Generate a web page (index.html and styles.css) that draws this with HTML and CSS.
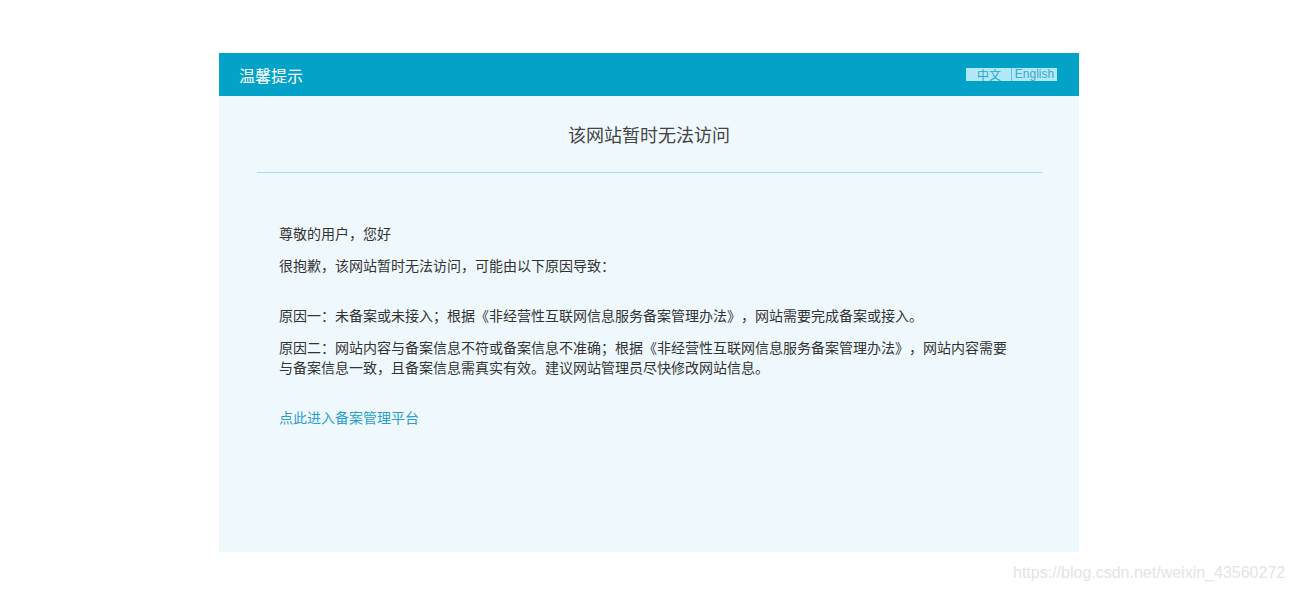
FILE: index.html
```html
<!DOCTYPE html>
<html lang="zh-CN">
<head>
<meta charset="utf-8">
<title>温馨提示</title>
<link rel="stylesheet" href="styles.css">
</head>
<body>
<div class="box">
  <div class="head">
    <span class="head-title">温馨提示</span>
    <div class="lang">
      <span class="lang-item lang-cn">中文</span><span class="lang-item lang-en">English</span>
    </div>
  </div>
  <div class="main">
    <h1 class="title">该网站暂时无法访问</h1>
    <div class="divider"></div>
    <div class="content">
      <p class="p">尊敬的用户，您好</p>
      <p class="p gap-after">很抱歉，该网站暂时无法访问，可能由以下原因导致：</p>
      <p class="p">原因一：未备案或未接入；根据《非经营性互联网信息服务备案管理办法》，网站需要完成备案或接入。</p>
      <p class="p">原因二：网站内容与备案信息不符或备案信息不准确；根据《非经营性互联网信息服务备案管理办法》，网站内容需要与备案信息一致，且备案信息需真实有效。建议网站管理员尽快修改网站信息。</p>
      <a class="link" href="#">点此进入备案管理平台</a>
    </div>
  </div>
</div>
<div class="watermark">https://blog.csdn.net/weixin_43560272</div>
</body>
</html>
```
FILE: styles.css
```css
html, body {
  margin: 0;
  padding: 0;
  background: #ffffff;
}
body {
  font-family: "Noto Sans CJK SC", "Microsoft YaHei", sans-serif;
  color: #333333;
  position: relative;
  height: 591px;
  overflow: hidden;
  text-spacing-trim: space-all;
}
.box {
  width: 860px;
  height: 499px;
  margin: 53px 0 0 219px;
  background: #eff9fd;
  display: flex;
  flex-direction: column;
}
.head {
  height: 43px;
  background: #03a3c9;
  display: flex;
  align-items: center;
  justify-content: space-between;
  padding: 0 22px 0 20px;
}
.head-title {
  color: #ffffff;
  font-size: 16px;
  line-height: 20px;
  padding-top: 1px;
}
.lang {
  display: flex;
  height: 13px;
}
.lang-item {
  display: flex;
  align-items: center;
  height: 13px;
  font-size: 12px;
  line-height: 13px;
  background: #b3e8f5;
  color: #2aa7cd;
  box-sizing: border-box;
}
.lang-cn {
  width: 46px;
  border-right: 1px solid #5cc3de;
  justify-content: flex-end;
  padding-right: 10px;
}
.lang-en {
  width: 45px;
  justify-content: center;
  font-family: "Liberation Sans", Arial, sans-serif;
  color: #3aa9cd;
}
.main {
  flex: 1;
  display: flex;
  flex-direction: column;
}
.title {
  margin: 24px 0 0 0;
  font-size: 18px;
  font-weight: normal;
  line-height: 28px;
  text-align: center;
  color: #444444;
}
.divider {
  height: 1px;
  background: #a9dcea;
  margin: 24px 37px 0 38px;
}
.content {
  padding: 50px 60px 0 60px;
  width: 736px;
  font-size: 14px;
}
.p {
  margin: 0 0 12px 0;
  line-height: 20px;
  font-size: 14px;
}
.gap-after {
  margin-bottom: 30px;
}
.link {
  display: block;
  margin-top: 30px;
  font-size: 14px;
  line-height: 20px;
  color: #2b9fc9;
  text-decoration: none;
}
.watermark {
  position: absolute;
  left: 1013px;
  top: 563px;
  font-family: "Liberation Sans", Arial, sans-serif;
  font-size: 16px;
  line-height: 20px;
  color: #e4e4e4;
}
```
